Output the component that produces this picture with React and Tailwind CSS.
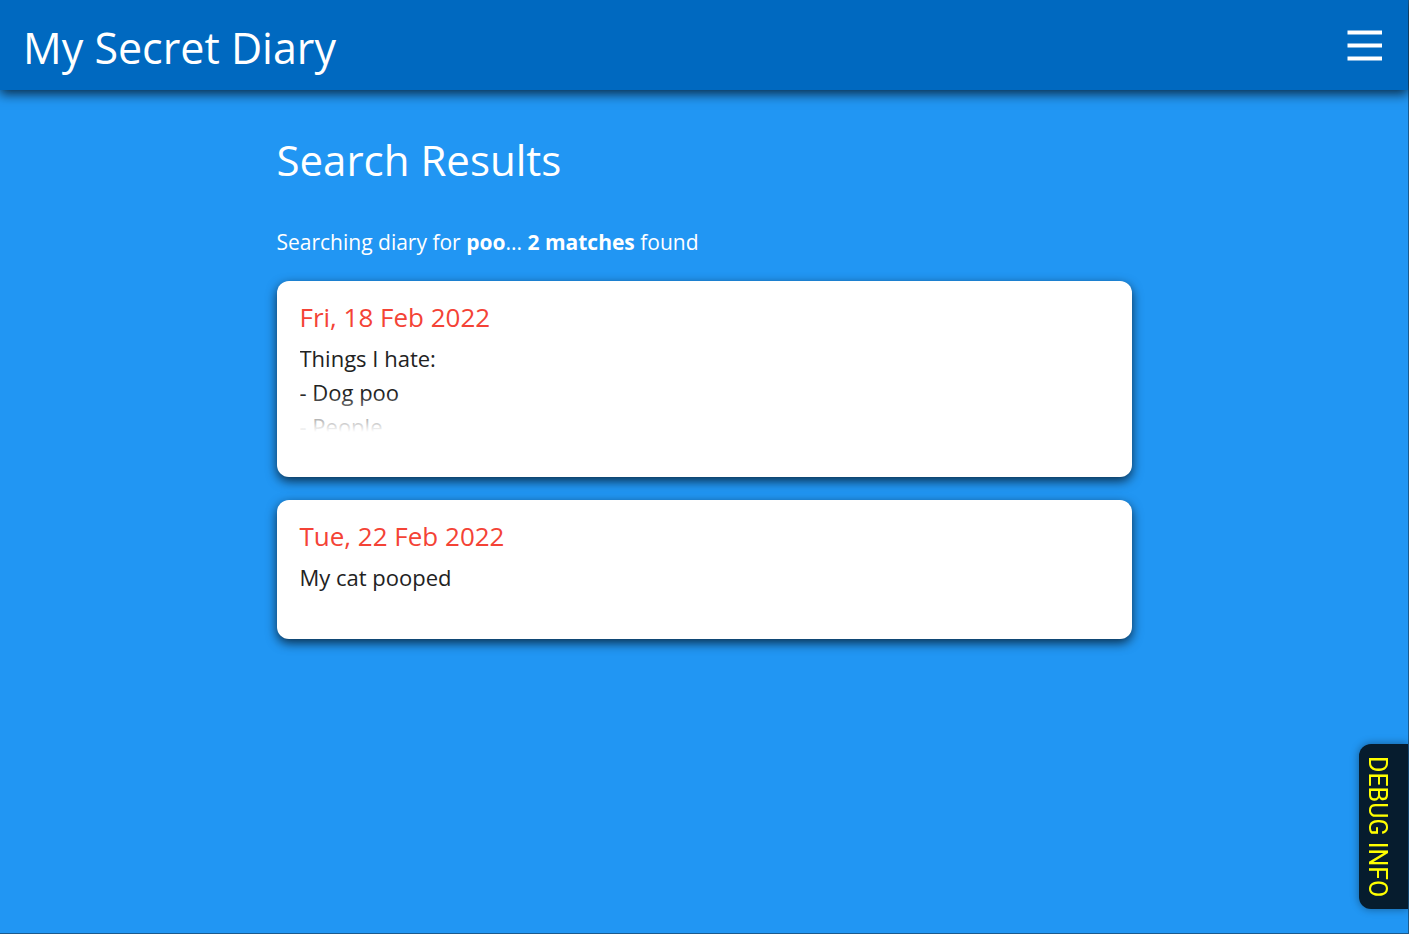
const entries = [
  { date: "Fri, 18 Feb 2022", lines: ["Things I hate:", "- Dog poo", "- People"], faded: true },
  { date: "Tue, 22 Feb 2022", lines: ["My cat pooped"], faded: false },
];

function Header() {
  return (
    <header className="flex h-[90px] items-center justify-between bg-[#0069c0] px-[23px] shadow-[0_4px_11px_rgba(0,0,0,0.7)]">
      <h1 className="pt-1.5 text-[43px] leading-[60px]">My Secret Diary</h1>
      <button type="button" aria-label="Menu" className="size-10">
        <svg viewBox="0 0 40 40" className="size-10" stroke="white" strokeWidth="4">
          <path d="M2.5 7.5H37M2.5 20.5H37M2.5 33.5H37" />
        </svg>
      </button>
    </header>
  );
}

function Entry({ date, lines, faded }) {
  return (
    <article className="rounded-xl bg-white px-[23px] pt-[15px] pb-[45px] shadow-[0_4px_11px_rgba(0,0,0,0.7)]">
      <h3 className="text-[26px] leading-[42px] text-[#f44336]">{date}</h3>
      <div className="relative mt-[3px] max-h-[91px] overflow-hidden text-[22px] leading-[34px] text-[#222222]">
        {lines.map((line) => (
          <p key={line}>{line}</p>
        ))}
        {faded && (
          <div className="absolute inset-x-0 bottom-0 h-[38px] bg-linear-to-b from-transparent to-white" />
        )}
      </div>
    </article>
  );
}

export default function App() {
  return (
    <div className="min-h-screen border-r border-b border-[#1c5a8c] bg-[#2196f3] font-['Open_Sans','Noto_Sans',sans-serif] text-white">
      <Header />
      <main className="mx-auto w-full max-w-[855px] pt-[38px]">
        <h2 className="text-[42px] leading-[64px]">Search Results</h2>
        <p className="pt-[33px] text-[21px] leading-[34px]">
          Searching diary for <b>poo</b>... <b>2 matches</b> found
        </p>
        <section className="flex flex-col gap-[23px] pt-[22px]">
          {entries.map((entry) => (
            <Entry key={entry.date} {...entry} />
          ))}
        </section>
      </main>
      <button
        type="button"
        className="fixed right-px bottom-[25px] rounded-l-xl bg-[#061c2e] pt-3 pr-[14px] pb-3 pl-px font-[Roboto,sans-serif] text-[25px] leading-[34px] text-[#ffff00] shadow-[0_0_8px_rgba(0,0,0,0.4)] [writing-mode:vertical-rl]"
      >
        DEBUG INFO
      </button>
    </div>
  );
}
